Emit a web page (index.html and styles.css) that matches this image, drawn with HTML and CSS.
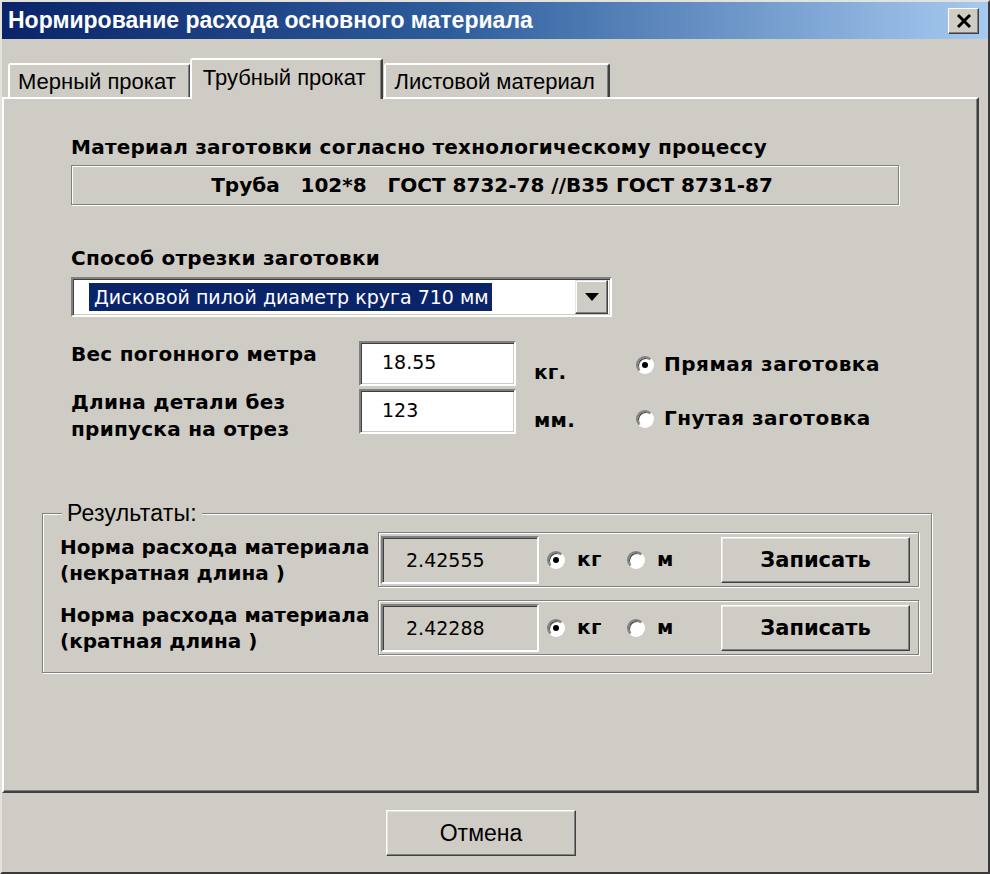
FILE: index.html
```html
<!DOCTYPE html>
<html lang="ru">
<head>
    <meta charset="UTF-8">
    <title>Нормирование расхода основного материала</title>
    <link rel="stylesheet" href="styles.css">
</head>
<body>

    <div class="window">
        <div class="titlebar">
            <span class="title">Нормирование расхода основного материала</span>
            <span class="close">
                <svg width="18" height="16" viewBox="0 0 18 16"><path d="M3 2 L15 14 M15 2 L3 14" stroke="#000" stroke-width="3"/></svg>
            </span>
        </div>

        <div class="tabs">
            <div class="tab">Мерный прокат</div>
            <div class="tab active">Трубный прокат</div>
            <div class="tab">Листовой материал</div>
        </div>

        <div class="panel">
            <div class="form">
                <div class="label">Материал заготовки согласно технологическому процессу</div>
                <div class="material">Труба&nbsp;&nbsp;&nbsp;102*8&nbsp;&nbsp;&nbsp;ГОСТ 8732-78 //В35 ГОСТ 8731-87</div>

                <div class="label cut-label">Способ отрезки заготовки</div>
                <div class="combo">
                    <span class="combo-value"><span class="selected">Дисковой пилой диаметр круга 710 мм</span></span>
                    <span class="combo-btn">
                        <svg width="14" height="8" viewBox="0 0 14 8"><path d="M0 0 H14 L7 8 Z" fill="#000"/></svg>
                    </span>
                </div>

                <div class="params">
                    <div class="label">Вес погонного метра</div>
                    <div class="field">18.55</div>
                    <div class="label unit">кг.</div>
                    <div class="shape">
                        <div class="option"><span class="radio checked"></span>Прямая заготовка</div>
                        <div class="option"><span class="radio"></span>Гнутая заготовка</div>
                    </div>
                    <div class="label">Длина детали без<br>припуска на отрез</div>
                    <div class="field">123</div>
                    <div class="label unit">мм.</div>
                </div>
            </div>

            <!-- Results -->
            <div class="group">
                <div class="legend"><span>Результаты:</span></div>

                <div class="result-row">
                    <div class="label">Норма расхода материала<br>(некратная длина )</div>
                    <div class="result-box">
                        <div class="field readonly">2.42555</div>
                        <div class="option small"><span class="radio checked"></span>кг</div>
                        <div class="option small"><span class="radio"></span>м</div>
                        <button class="btn save">Записать</button>
                    </div>
                </div>

                <div class="result-row">
                    <div class="label">Норма расхода материала<br>(кратная длина )</div>
                    <div class="result-box">
                        <div class="field readonly">2.42288</div>
                        <div class="option small"><span class="radio checked"></span>кг</div>
                        <div class="option small"><span class="radio"></span>м</div>
                        <button class="btn save">Записать</button>
                    </div>
                </div>
            </div>
        </div>

        <div class="footer">
            <button class="btn cancel">Отмена</button>
        </div>
    </div>

</body>
</html>
```

FILE: styles.css
```css
html, body {
    margin: 0;
    background-color: #cfccc5;
}

.window {
    width: 990px;
    height: 874px;
    box-sizing: border-box;
    border: 2px solid;
    border-color: #e4e2dc #3a3a3a #3a3a3a #e4e2dc;
    background-color: #cfccc5;
    color: #000;
    font-family: 'Liberation Sans', Arial, sans-serif;
}

/* Title bar */
.titlebar {
    height: 37px;
    display: flex;
    align-items: center;
    justify-content: space-between;
    padding: 0 9px 0 6px;
    background: linear-gradient(to right, #0a246a 0%, #2d5c9c 45%, #a6caf0 100%);
}

.title {
    color: #fff;
    font-weight: bold;
    font-size: 23px;
}

.close {
    width: 31px;
    height: 26px;
    box-sizing: border-box;
    display: flex;
    align-items: center;
    justify-content: center;
    background-color: #cfccc5;
    border: 1px solid;
    border-color: #fff #404040 #404040 #fff;
    box-shadow: inset -1px -1px 0 #808080;
}

/* Tabs */
.tabs {
    display: flex;
    align-items: flex-end;
    height: 41px;
    margin: 19px 0 -2px 6px;
    position: relative;
    z-index: 1;
}

.tab {
    height: 34px;
    box-sizing: border-box;
    padding: 4px 13px 0 8px;
    font-size: 22px;
    background-color: #cfccc5;
    border: 2px solid;
    border-bottom: none;
    border-color: #fff #404040 transparent #fff;
    border-radius: 3px 3px 0 0;
    box-shadow: inset -1px 0 0 #808080;
    margin-bottom: 2px;
}

.tab.active {
    height: 41px;
    padding: 5px 16px 0 11px;
    margin: 0 -1px 0 -1px;
}

.tab + .tab:not(.active) {
    margin-left: 2px;
}

/* Tab panel */
.panel {
    height: 696px;
    width: 977px;
    box-sizing: border-box;
    border: 2px solid;
    border-color: #fff #404040 #404040 #fff;
    box-shadow: inset -1px -1px 0 #808080;
}

.form {
    padding: 36px 0 0 67px;
}

.label {
    font-family: 'DejaVu Sans', sans-serif;
    font-weight: bold;
    font-size: 20px;
    letter-spacing: 0.25px;
    line-height: 24px;
}

.material {
    width: 828px;
    height: 40px;
    box-sizing: border-box;
    margin-top: 6px;
    border: 1px solid #808080;
    box-shadow: inset 1px 1px 0 #fff, 1px 1px 0 #fff;
    font-family: 'DejaVu Sans', sans-serif;
    font-weight: bold;
    font-size: 20px;
    line-height: 38px;
    text-align: center;
    padding-left: 14px;
}

.cut-label {
    margin-top: 41px;
}

/* Combo box */
.combo {
    width: 541px;
    height: 40px;
    box-sizing: border-box;
    margin-top: 7px;
    display: flex;
    align-items: center;
    background-color: #fff;
    border: 2px solid;
    border-color: #808080 #fff #fff #808080;
    box-shadow: inset 1px 1px 0 #404040, inset -1px -1px 0 #cfccc5;
    padding: 0 2px 0 16px;
}

.combo-value {
    flex: 1;
}

.selected {
    display: inline-block;
    background-color: #0a246a;
    color: #fff;
    font-family: 'DejaVu Sans', sans-serif;
    font-size: 19px;
    line-height: 28px;
    padding: 0 3px 0 5px;
}

.combo-btn {
    width: 33px;
    height: 34px;
    box-sizing: border-box;
    display: flex;
    align-items: center;
    justify-content: center;
    background-color: #cfccc5;
    border: 1px solid;
    border-color: #e8e6e0 #404040 #404040 #e8e6e0;
    box-shadow: inset -1px -1px 0 #808080, inset 1px 1px 0 #fff;
}

/* Weight / length */
.params {
    display: grid;
    grid-template-columns: 288px 157px 120px auto;
    grid-template-rows: 45px 45px;
    row-gap: 3px;
    margin-top: 24px;
}

.params .label {
    line-height: 27px;
}

.field {
    box-sizing: border-box;
    background-color: #fff;
    border: 2px solid;
    border-color: #808080 #fff #fff #808080;
    box-shadow: inset 1px 1px 0 #404040, inset -1px -1px 0 #cfccc5;
    font-family: 'DejaVu Sans', sans-serif;
    font-size: 19px;
    line-height: 38px;
    padding-left: 21px;
}

.unit {
    align-self: end;
    padding-left: 18px;
}

.shape {
    grid-column: 4;
    grid-row: 1 / 3;
    display: flex;
    flex-direction: column;
    gap: 27px;
    padding-top: 10px;
}

.option {
    display: flex;
    align-items: center;
    gap: 10px;
    font-family: 'DejaVu Sans', sans-serif;
    font-weight: bold;
    font-size: 20px;
    letter-spacing: 0.5px;
    line-height: 27px;
}

.radio {
    width: 18px;
    height: 18px;
    box-sizing: border-box;
    border-radius: 50%;
    background-color: #fff;
    border: 2px solid;
    border-color: #808080 #fff #fff #808080;
    box-shadow: inset 1px 1px 0 #404040;
    display: flex;
    align-items: center;
    justify-content: center;
}

.radio.checked::after {
    content: "";
    width: 6px;
    height: 6px;
    border-radius: 50%;
    background-color: #000;
}

/* Results group */
.group {
    width: 890px;
    height: 160px;
    box-sizing: border-box;
    margin: 79px 0 0 38px;
    border: 1px solid #808080;
    box-shadow: inset 1px 1px 0 #fff, 1px 1px 0 #fff;
    padding: 0 0 0 17px;
}

.legend {
    margin: -13px 0 0 2px;
    height: 25px;
}

.legend span {
    display: inline-block;
    background-color: #cfccc5;
    padding: 0 5px;
    font-size: 23px;
    letter-spacing: 0.2px;
    line-height: 25px;
}

.result-row {
    display: flex;
    align-items: center;
    margin-top: 6px;
}

.result-row + .result-row {
    margin-top: 13px;
}

.result-row .label {
    width: 318px;
    line-height: 26px;
    letter-spacing: 0;
}

.result-box {
    width: 541px;
    height: 55px;
    box-sizing: border-box;
    display: flex;
    align-items: center;
    border: 1px solid #808080;
    box-shadow: inset 1px 1px 0 #fff, 1px 1px 0 #fff;
    padding: 0 8px 0 2px;
}

.field.readonly {
    width: 158px;
    height: 48px;
    line-height: 44px;
    background-color: #cfccc5;
    padding-left: 23px;
}

.option.small {
    gap: 12px;
    margin-left: 8px;
    width: 72px;
}

.btn {
    box-sizing: border-box;
    background-color: #cfccc5;
    border: 1px solid;
    border-color: #fff #404040 #404040 #fff;
    box-shadow: inset -1px -1px 0 #808080, inset 1px 1px 0 #e8e6e0;
    color: #000;
    padding: 0;
}

.save {
    margin-left: auto;
    width: 189px;
    height: 46px;
    font-family: 'DejaVu Sans', sans-serif;
    font-weight: bold;
    font-size: 21px;
}

/* Footer */
.footer {
    padding: 17px 0 0 384px;
}

.cancel {
    width: 190px;
    height: 46px;
    font-family: 'Liberation Sans', Arial, sans-serif;
    font-size: 23px;
}
```
